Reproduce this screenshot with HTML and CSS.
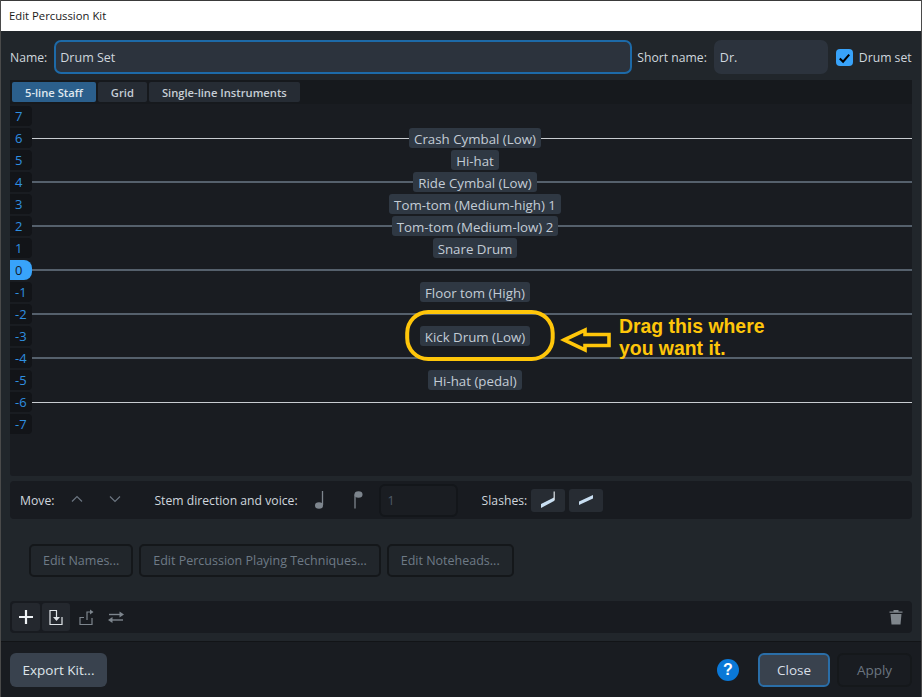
FILE: index.html
```html
<!DOCTYPE html>
<html lang="en">
<head>
<meta charset="utf-8">
<title>Edit Percussion Kit</title>
<link rel="stylesheet" href="styles.css">
</head>
<body>
<div class="window">
  <header class="titlebar">Edit Percussion Kit</header>
  <main class="content">
    <div class="name-row">
      <label class="lbl">Name:</label>
      <div class="field name-field">Drum Set</div>
      <label class="lbl short-lbl">Short name:</label>
      <div class="field short-field">Dr.</div>
      <span class="check"><svg viewBox="0 0 18 18" width="18" height="18"><path d="M4 9.5l3.5 3.5L14 5.5" fill="none" stroke="#000" stroke-width="2.2"/></svg></span>
      <span class="lbl">Drum set</span>
    </div>
    <div class="tabs">
      <span class="tab active">5-line Staff</span>
      <span class="tab">Grid</span>
      <span class="tab">Single-line Instruments</span>
    </div>
    <section class="staff">
      <div class="row"><span class="num">7</span></div>
      <div class="row line-white"><span class="num">6</span><span class="chip">Crash Cymbal (Low)</span></div>
      <div class="row"><span class="num">5</span><span class="chip">Hi-hat</span></div>
      <div class="row line-grey"><span class="num">4</span><span class="chip">Ride Cymbal (Low)</span></div>
      <div class="row"><span class="num">3</span><span class="chip">Tom-tom (Medium-high) 1</span></div>
      <div class="row line-grey"><span class="num">2</span><span class="chip">Tom-tom (Medium-low) 2</span></div>
      <div class="row"><span class="num">1</span><span class="chip">Snare Drum</span></div>
      <div class="row line-grey"><span class="num zero">0</span></div>
      <div class="row"><span class="num">-1</span><span class="chip">Floor tom (High)</span></div>
      <div class="row line-grey"><span class="num">-2</span></div>
      <div class="row"><span class="num">-3</span><span class="chip">Kick Drum (Low)</span></div>
      <div class="row line-grey"><span class="num">-4</span></div>
      <div class="row"><span class="num">-5</span><span class="chip">Hi-hat (pedal)</span></div>
      <div class="row line-white"><span class="num">-6</span></div>
      <div class="row"><span class="num">-7</span></div>
      <svg class="note-mark" viewBox="0 0 160 60" width="160" height="60">
        <rect x="2.2" y="2" width="145.5" height="47" rx="21" fill="none" stroke="#ffc60a" stroke-width="4"/>
      </svg>
      <svg class="note-arrow" viewBox="0 0 52 34" width="52" height="34">
        <path d="M4 17L25 7V11.5H49V22.5H25V27Z" fill="none" stroke="#ffc60a" stroke-width="3.6"/>
      </svg>
      <div class="note-text">Drag this where<br>you want it.</div>
    </section>
    <div class="toolbar">
      <span class="lbl t-move">Move:</span>
      <svg class="chev" width="14" height="8" viewBox="0 0 14 8"><path d="M2 6.5l5-5 5 5" fill="none" stroke="#6b7580" stroke-width="1.2"/></svg>
      <svg class="chev chev2" width="14" height="8" viewBox="0 0 14 8"><path d="M2 1.5l5 5 5-5" fill="none" stroke="#6b7580" stroke-width="1.2"/></svg>
      <span class="lbl t-stem">Stem direction and voice:</span>
      <svg class="note-ic" width="12" height="22" viewBox="0 0 12 22"><ellipse cx="5" cy="16.5" rx="4" ry="3.2" fill="#7d858d"/><path d="M8.5 2v14" stroke="#7d858d" stroke-width="1.3"/></svg>
      <svg class="note-ic note2" width="12" height="22" viewBox="0 0 12 22"><ellipse cx="5.5" cy="5.5" rx="4" ry="3.2" fill="#7d858d"/><path d="M2 5.5v14" stroke="#7d858d" stroke-width="1.3"/></svg>
      <div class="voice">1</div>
      <span class="lbl t-slash">Slashes:</span>
      <span class="slash-btn"><svg width="16" height="20" viewBox="0 0 16 20"><path d="M1 14L14 7.5V11L1 18Z" fill="#c9dff2"/><path d="M14.2 1.5v9" stroke="#dde3e8" stroke-width="1.2"/></svg></span>
      <span class="slash-btn"><svg width="16" height="12" viewBox="0 0 16 12"><path d="M1 7.5L15 1V4.5L1 11Z" fill="#c9dff2"/></svg></span>
    </div>
    <div class="edit-row">
      <span class="btn-off">Edit Names...</span>
      <span class="btn-off">Edit Percussion Playing Techniques...</span>
      <span class="btn-off">Edit Noteheads...</span>
    </div>
    <div class="iconbar">
      <span class="ic-btn"><svg width="16" height="16" viewBox="0 0 16 16"><path d="M8 1v14M1 8h14" stroke="#eef2f5" stroke-width="2.2"/></svg></span>
      <span class="ic-btn"><svg width="16" height="18" viewBox="0 0 16 18"><path d="M9 2.5H2V16.5H14V9" fill="none" stroke="#dfe4e8" stroke-width="1.2"/><path d="M8.5 2.5V10" fill="none" stroke="#dfe4e8" stroke-width="1.2"/><path d="M5 9h7l-3.5 4z" fill="#dfe4e8"/></svg></span>
      <span class="ic-plain"><svg width="16" height="18" viewBox="0 0 16 18"><path d="M6 9.5H2V16.5H14V10" fill="none" stroke="#7d858d" stroke-width="1.2"/><path d="M9 12V4H12" fill="none" stroke="#7d858d" stroke-width="1.2"/><path d="M12 1.5v5l3.5-2.5z" fill="#7d858d"/></svg></span>
      <span class="ic-plain"><svg width="18" height="16" viewBox="0 0 18 16"><path d="M2 5.5H13" stroke="#7d858d" stroke-width="1.4"/><path d="M12.5 2.5v6l4.5-3z" fill="#7d858d"/><path d="M16 11H5" stroke="#7d858d" stroke-width="1.4"/><path d="M5.5 8v6L1 11z" fill="#7d858d"/></svg></span>
      <svg class="trash" width="14" height="16" viewBox="0 0 14 16"><path d="M0.5 2.5h13v1.3h-13zM4.5 2.5V1h5v1.5" fill="#7f868c"/><path d="M1.5 5h11l-1 10.5h-9z" fill="#7f868c"/></svg>
    </div>
    <footer class="footer">
      <span class="btn export">Export Kit...</span>
      <span class="help">?</span>
      <span class="btn close">Close</span>
      <span class="btn apply">Apply</span>
    </footer>
  </main>
</div>
</body>
</html>
```

FILE: styles.css
```css
* { box-sizing: border-box; }
html, body { margin: 0; height: 100%; background: #4a4a4a; }
body { font-family: "Open Sans", "Noto Sans", sans-serif; font-size: 12.5px; color: #d5dce3; overflow: hidden; }
.window { width: 920px; height: 697px; margin-left: 1px; display: flex; flex-direction: column; border-top: 1px solid #3a3a3a; }
.titlebar { height: 30px; flex: none; background: #fff; color: #1a1a1a; font-size: 11.3px; display: flex; align-items: center; padding-left: 8px; padding-bottom: 1px; }
.content { flex: 1; background: #21262b; display: flex; flex-direction: column; padding: 9px 0 0 9px; min-height: 0; }
.lbl { color: #cfd6dd; white-space: nowrap; font-size: 12.2px; }
.name-row { display: flex; align-items: center; height: 34px; }
.field { height: 34px; background: #2c333d; border-radius: 7px; display: flex; align-items: center; padding-left: 6px; color: #cfd6dd; }
.name-field { width: 578px; margin-left: 7px; border: 2px solid #1d6aa8; padding-left: 4px; }
.short-lbl { margin-left: 5px; }
.short-field { width: 114px; margin-left: 7px; }
.check { width: 17px; height: 17px; border-radius: 4px; background: #38a3fa; margin: 0 6px 0 8px; display: flex; }
.tabs { width: 902px; height: 24px; background: #16191d; margin-top: 6px; display: flex; align-items: center; gap: 2px; padding-left: 2px; }
.tab { height: 20px; padding: 0 13px; background: #262c34; border-radius: 2px; display: flex; align-items: center; font-size: 11.2px; font-weight: 600; color: #c6ced6; }
.tab.active { background: #2b5f8c; color: #dfe7ee; }
.staff { position: relative; width: 902px; height: 372px; background: #191c21; border-radius: 0 0 3px 3px; padding-top: 2px; }
.row { position: relative; height: 22px; display: flex; align-items: flex-start; justify-content: center; padding-left: 28px; }
.line-white::before, .line-grey::before { content: ""; position: absolute; left: 22px; right: 0; }
.line-white::before { background: #c8ccd0; top: 10px; height: 1px; }
.line-grey::before { background: #55606c; top: 9px; height: 2px; }
.num { position: absolute; left: 0; top: 0; width: 22px; height: 20px; background: #121418; border-radius: 0 4px 4px 0; color: #2f8fe0; font-size: 13px; display: flex; align-items: center; padding-left: 5px; }
.num.zero { background: #38a3fa; color: #14202c; border-radius: 0 8px 8px 0; }
.chip { position: relative; height: 20px; background: #2f3843; border-radius: 3px; padding: 1px 5px 0; display: flex; align-items: center; color: #c3ccd6; font-size: 13.3px; }
.note-mark { position: absolute; left: 395px; top: 206px; }
.note-arrow { position: absolute; left: 550px; top: 219px; }
.note-text { position: absolute; left: 609px; top: 211px; font: bold 19.4px/22px "Liberation Sans", sans-serif; color: #ffc60a; }
.toolbar { width: 902px; height: 38px; margin-top: 5px; background: #181b20; border-radius: 4px; display: flex; align-items: center; }
.t-move { margin-left: 10px; }
.chev { margin-left: 16px; margin-top: -2px; }
.chev2 { margin-left: 24px; }
.t-stem { margin-left: 32px; }
.note-ic { margin-left: 16px; }
.note2 { margin-left: 27px; }
.voice { width: 79px; height: 33px; margin-left: 14px; border: 2px solid #13161a; background: #1a1d22; border-radius: 6px; color: #4e5b68; display: flex; align-items: center; padding-left: 7px; }
.t-slash { margin-left: 24px; margin-right: 4px; }
.slash-btn { width: 34px; height: 23px; background: #272c33; border-radius: 3px; margin-right: 4px; display: flex; align-items: center; justify-content: center; }
.edit-row { display: flex; gap: 6px; padding-left: 19px; margin-top: 25px; height: 33px; }
.btn-off { height: 33px; padding: 0 12px; border: 2px solid #14171a; border-radius: 5px; display: flex; align-items: center; color: #6e7a86; white-space: nowrap; }
.iconbar { width: 902px; height: 32px; margin-top: 24px; background: #181b20; border-radius: 4px; display: flex; align-items: center; padding-left: 2px; gap: 2px; }
.ic-btn { width: 28px; height: 28px; background: #24282e; border-radius: 3px; display: flex; align-items: center; justify-content: center; }
.ic-plain { width: 28px; height: 28px; display: flex; align-items: center; justify-content: center; }
.trash { margin-left: auto; margin-right: 9px; }
.footer { flex: 1; margin: 8px 0 0 -9px; background: #191c21; border-top: 1px solid #121417; display: flex; align-items: center; padding: 0 9px; }
.btn { height: 34px; border-radius: 6px; display: flex; align-items: center; justify-content: center; font-size: 13.5px; }
.export { width: 97px; background: #39424e; color: #dfe5ea; }
.help { width: 22px; height: 22px; margin-left: auto; border-radius: 50%; background: #0a78d7; color: #fff; font: bold 16px/22px "Liberation Sans", sans-serif; text-align: center; }
.close { width: 72px; margin-left: 19px; background: #39424e; border: 2px solid #2a6ea8; color: #d8dfe6; }
.apply { width: 75px; margin-left: 7px; border: 2px solid #15181b; color: #6b7580; }
```
